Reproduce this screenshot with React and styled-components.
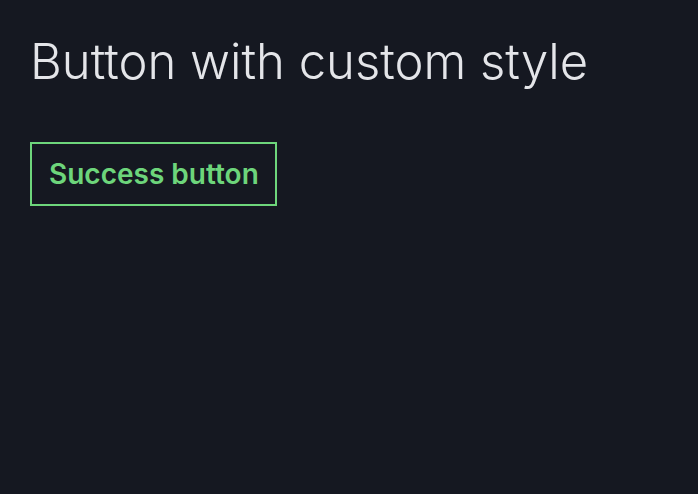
import styled, { createGlobalStyle } from "styled-components";

const GlobalStyle = createGlobalStyle`
  html, body {
    margin: 0;
    background: #151821;
  }
  body {
    font-family: Inter, "Noto Sans", sans-serif;
  }
`;

const Page = styled.div`
  min-height: 494px;
  padding: 33px 30px;
  box-sizing: border-box;
  display: flex;
  flex-direction: column;
  align-items: flex-start;
  gap: 50px;
`;

const Title = styled.h1`
  margin: 0;
  font-size: 49px;
  line-height: 1.2;
  font-weight: 300;
  color: #e4e5e9;
`;

const SuccessButton = styled.button`
  font-family: Inter, "Noto Sans", sans-serif;
  font-size: 28px;
  font-weight: 600;
  color: ${(p) => p.$color};
  background: transparent;
  border: 2px solid ${(p) => p.$color};
  padding: 0 16px 0 17px;
  height: 64px;
  cursor: pointer;
`;

export default function App() {
  return (
    <>
      <GlobalStyle />
      <Page>
        <Title>Button with custom style</Title>
        <SuccessButton $color="#6dd57b">Success button</SuccessButton>
      </Page>
    </>
  );
}
